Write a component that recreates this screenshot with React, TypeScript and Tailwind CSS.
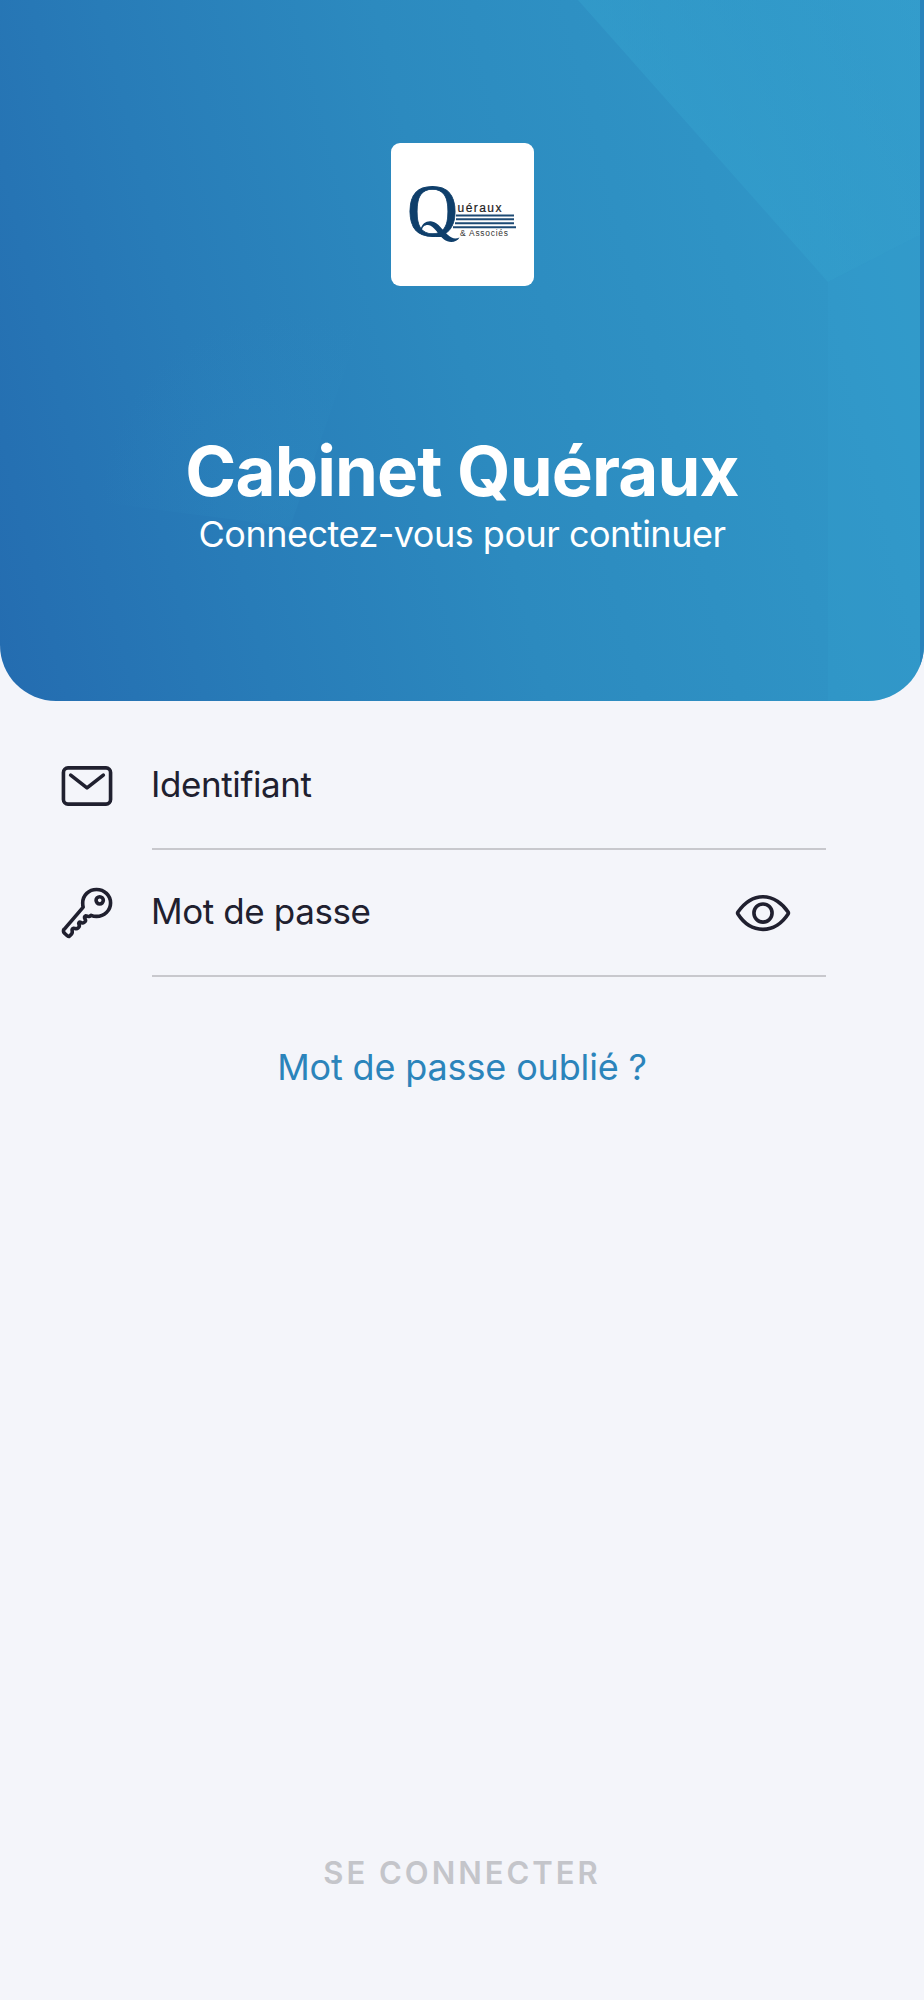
import React, { useState } from "react";
import { IoEyeOutline, IoKeyOutline, IoMailOutline } from "react-icons/io5";

const STAVES = [
  { y: 72.4, x1: 65, x2: 123 },
  { y: 76.3, x1: 65, x2: 123 },
  { y: 80.2, x1: 64, x2: 123 },
  { y: 84.2, x1: 62, x2: 125 },
];

const Logo: React.FC = () => (
  <div className="relative h-[143px] w-[143px] overflow-hidden rounded-[9px] bg-white">
    <svg viewBox="0 0 143 143" className="h-full w-full">
      <defs>
        <clipPath id="bowl">
          <rect x="10" y="35" width="60" height="59" />
        </clipPath>
      </defs>
      {STAVES.map((s) => (
        <line key={s.y} x1={s.x1} y1={s.y} x2={s.x2} y2={s.y} stroke="#1d4a74" strokeWidth="2" />
      ))}
      <text
        x="16"
        y="92.5"
        fontSize="75"
        textLength="51"
        lengthAdjust="spacingAndGlyphs"
        fill="#0f3f6b"
        stroke="#0f3f6b"
        strokeWidth="0.8"
        fontFamily="Liberation Serif, serif"
        clipPath="url(#bowl)"
      >
        Q
      </text>
      {/* swash under the initial */}
      <path
        d="M29.5 87C31 80 36 77.5 41 78.5C48 80 51 87 57 92C61 95.5 64 96.5 68.5 94.5C66 99.5 58 100.5 53 96.5C47 91.5 43 82.5 37 82C33 82 31.5 84 30.5 88Z"
        fill="#0f3f6b"
      />
      <text
        x="66.5"
        y="69"
        fontSize="12"
        textLength="44"
        fill="#222"
        stroke="#222"
        strokeWidth="0.2"
        fontFamily="Liberation Sans, sans-serif"
      >
        uéraux
      </text>
      <text x="69" y="93" fontSize="8.4" textLength="48" fill="#333" fontFamily="Liberation Sans, sans-serif">
        &amp; Associés
      </text>
    </svg>
  </div>
);

const HeaderBackdrop: React.FC = () => (
  <svg
    viewBox="0 0 924 701"
    preserveAspectRatio="none"
    className="pointer-events-none absolute inset-0 h-full w-full"
  >
    <defs>
      <linearGradient id="facet" gradientUnits="userSpaceOnUse" x1="700" y1="150" x2="850" y2="30">
        <stop offset="0" stopColor="#34a1ce" stopOpacity="0.5" />
        <stop offset="1" stopColor="#34a1ce" stopOpacity="0.25" />
      </linearGradient>
      <radialGradient id="facetLow" gradientUnits="userSpaceOnUse" cx="290" cy="500" r="190">
        <stop offset="0" stopColor="#2f8cc2" stopOpacity="0.28" />
        <stop offset="1" stopColor="#2f8cc2" stopOpacity="0" />
      </radialGradient>
    </defs>
    <path d="M578 0L828 282L920 235V0Z" fill="url(#facet)" />
    <path d="M828 282L920 235V701H828Z" fill="#34a1ce" opacity="0.25" />
    <path d="M60 497L290 527L370 300L60 300Z" fill="url(#facetLow)" />
    <rect x="920" width="4" height="701" fill="#2a83bb" />
  </svg>
);

type FieldProps = {
  icon: React.ReactNode;
  label: string;
  type: string;
  action?: React.ReactNode;
};

const Field: React.FC<FieldProps> = ({ icon, label, type, action }) => (
  <label className="flex h-[127px] items-stretch">
    <span className="flex w-[94px] items-center pb-[2px] text-[#20202f]">{icon}</span>
    <span className="flex flex-1 items-center border-b-2 border-[#c8c8cd]">
      <input
        type={type}
        placeholder={label}
        className="-ml-px min-w-0 flex-1 bg-transparent pb-[2px] text-[35px] tracking-[-0.4px] text-[#20202f] outline-none placeholder:text-[#20202f]"
      />
      {action}
    </span>
  </label>
);

export default function App() {
  const [visible, setVisible] = useState(false);

  return (
    <div className="flex h-[2000px] w-[924px] flex-col bg-[#f4f5fa] font-['Inter',sans-serif]">
      <header className="relative flex h-[701px] flex-col items-center overflow-hidden rounded-b-[56px] bg-[linear-gradient(76deg,#246cb0_0%,#287cb8_25%,#2c8abf_50%,#3096c7_85%,#339bcb_100%)] pt-[143px] text-white">
        <HeaderBackdrop />
        <Logo />
        <h1 className="relative mt-[144px] text-[69px] leading-[83px] font-bold tracking-[-0.9px]">Cabinet Quéraux</h1>
        <p className="relative -mt-px text-[36px] leading-[44px] tracking-[-0.5px]">Connectez-vous pour continuer</p>
      </header>

      <form className="flex flex-1 flex-col pt-[22px]">
        <div className="pr-[98px] pl-[58px]">
          <Field icon={<IoMailOutline size={58} />} label="Identifiant" type="text" />
          <Field
            icon={<IoKeyOutline size={58} />}
            label="Mot de passe"
            type={visible ? "text" : "password"}
            action={
              <button type="button" className="mr-[34px]" onClick={() => setVisible(!visible)}>
                <IoEyeOutline size={58} className="text-[#20202f]" />
              </button>
            }
          />
        </div>
        <a href="#" className="mt-[68px] self-center text-[36px] leading-[44px] tracking-[-0.15px] text-[#2b84bb]">
          Mot de passe oublié ?
        </a>
        <button
          type="submit"
          disabled
          className="mt-auto mb-[105px] self-center text-[31px] leading-[44px] font-semibold tracking-[3px] text-[#c4c5ca]"
        >
          SE CONNECTER
        </button>
      </form>
    </div>
  );
}
